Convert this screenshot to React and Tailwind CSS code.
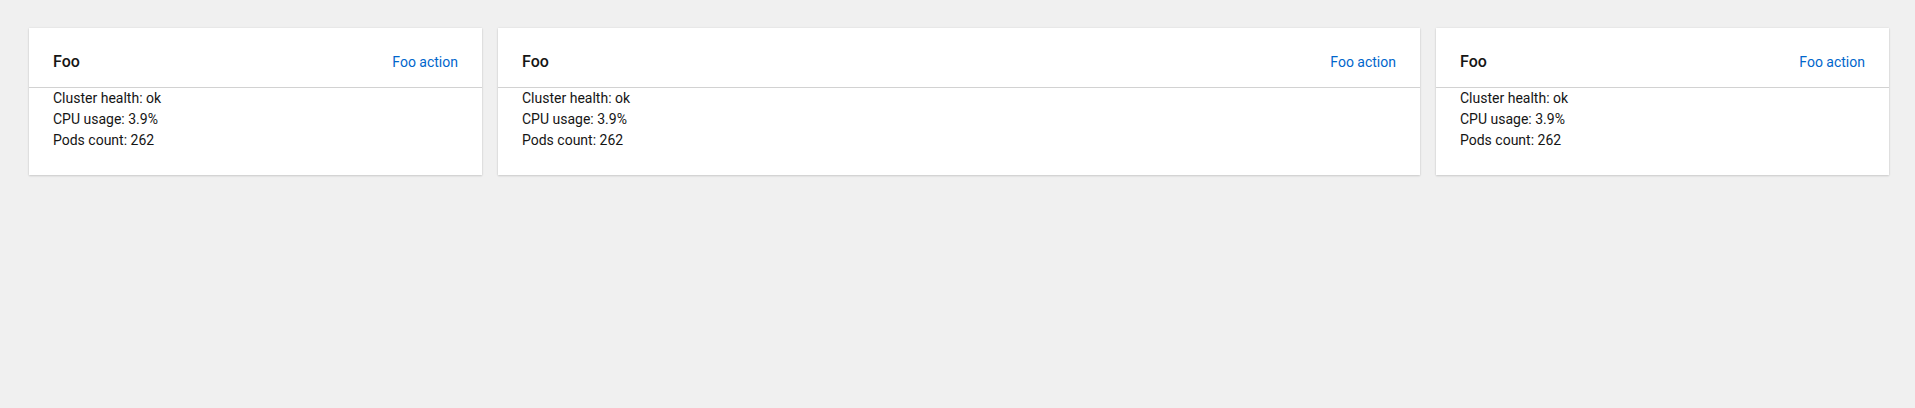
import React from "react";

function Card({ className = "" }) {
  return (
    <div className={"bg-white shadow-[0_1px_2px_0_rgba(3,3,3,0.14),0_0_2px_0_rgba(3,3,3,0.08)] flex flex-col " + className}>
      <div className="flex items-center justify-between px-6 pt-[22px] pb-[13px] border-b border-[#d2d2d2] leading-6">
        <div className="text-[16px] font-medium text-[#151515]">Foo</div>
        <a className="text-[14px] text-[#0066cc] cursor-pointer">Foo action</a>
      </div>
      <div className="px-6 pb-6 text-[14px] leading-[21px] text-[#151515]">
        <div>Cluster health: ok</div>
        <div>CPU usage: 3.9%</div>
        <div>Pods count: 262</div>
      </div>
    </div>
  );
}

export default function App() {
  return (
    <div
      className="min-h-[408px] w-full bg-[#f0f0f0] pl-[29px] pr-[26px] pt-[28px]"
      style={{ fontFamily: "Roboto, 'Liberation Sans', sans-serif" }}
    >
      <div className="grid grid-cols-4 gap-4 items-start">
        <Card />
        <Card className="col-span-2" />
        <Card />
      </div>
    </div>
  );
}
